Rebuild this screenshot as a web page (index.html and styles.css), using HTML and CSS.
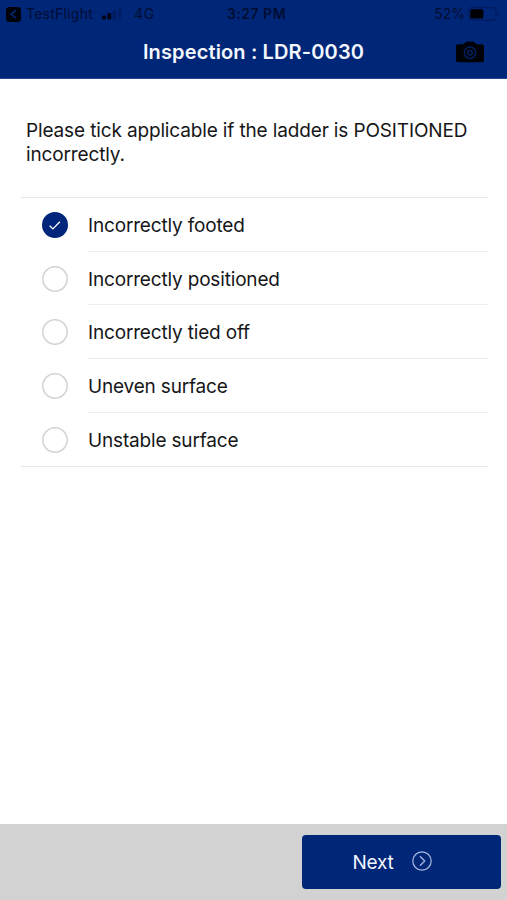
FILE: index.html
```html
<!DOCTYPE html>
<html lang="en">
<head>
<meta charset="utf-8">
<title>Inspection : LDR-0030</title>
<link rel="stylesheet" href="styles.css">
</head>
<body>
<div class="screen">
  <header class="header">
    <div class="status">
      <div class="status-left">
        <svg class="back" viewBox="0 0 15 15"><rect width="15" height="15" rx="3.5" fill="#00020a"/><path d="M10 3.400 5 7.300l5 3.900" fill="none" stroke="#002678" stroke-width="1.5"/></svg>
        <span class="app">TestFlight</span>
        <svg class="signal" viewBox="0 0 20 12"><rect x="0" y="7.500" width="4" height="4" rx="1" fill="#000617"/><rect x="5.300" y="5" width="4" height="6.500" rx="1" fill="#000617"/><rect x="10.600" y="2.500" width="3.500" height="9" rx="1" fill="#001c60"/><rect x="16" y="0" width="3.500" height="11.500" rx="1" fill="#001f67"/></svg>
        <span class="network">4G</span>
      </div>
      <span class="time">3:27 PM</span>
      <div class="status-right">
        <span class="percent">52%</span>
        <svg class="battery" viewBox="0 0 31 14"><rect x=".6" y=".6" width="27.500" height="12.600" rx="3.500" fill="none" stroke="#001b5d" stroke-width="1.200"/><rect x="2.300" y="2.300" width="13" height="9.300" rx="1.500" fill="#000"/><path d="M29.300 4.700q1.400.8 1.400 2.300t-1.400 2.300z" fill="#001b5d"/></svg>
      </div>
    </div>
    <div class="nav">
      <h1 class="title">Inspection : LDR-0030</h1>
      <svg class="camera" viewBox="0 0 28 22"><path d="M2 3.200h5.500L10 1q.8-.6 1.700-.6h4.600q.9 0 1.700.6l2.500 2.200H26q2 0 2 2v14q0 2-2 2H2q-2 0-2-2v-14q0-2 2-2z" fill="#000207"/><circle cx="14" cy="11.800" r="5.700" fill="none" stroke="#002263" stroke-width="1.500"/><circle cx="14" cy="11.800" r="2.300" fill="none" stroke="#002263" stroke-width="1.500"/></svg>
    </div>
  </header>
  <main class="content">
    <p class="prompt">Please tick applicable if the ladder is POSITIONED<br>incorrectly.</p>
    <ul class="options">
      <li class="option"><svg class="radio" viewBox="0 0 26 26"><circle cx="13" cy="13" r="13" fill="#00257a"/><path d="m7.700 13.800 3.200 3.100 7-7.100" fill="none" stroke="#fff" stroke-width="1.300"/></svg><span class="label">Incorrectly footed</span></li>
      <li class="option"><svg class="radio" viewBox="0 0 26 26"><circle class="ring" cx="13" cy="13" r="12.200"/></svg><span class="label">Incorrectly positioned</span></li>
      <li class="option"><svg class="radio" viewBox="0 0 26 26"><circle class="ring" cx="13" cy="13" r="12.200"/></svg><span class="label">Incorrectly tied off</span></li>
      <li class="option"><svg class="radio" viewBox="0 0 26 26"><circle class="ring" cx="13" cy="13" r="12.200"/></svg><span class="label">Uneven surface</span></li>
      <li class="option"><svg class="radio" viewBox="0 0 26 26"><circle class="ring" cx="13" cy="13" r="12.200"/></svg><span class="label">Unstable surface</span></li>
    </ul>
  </main>
  <footer class="footer">
    <button class="next"><span>Next</span><svg class="arrow" viewBox="0 0 20 20"><circle cx="10" cy="10" r="9.200" fill="none" stroke="#a9b9df" stroke-width="1.200"/><path d="m8 5.300 4.700 4.700L8 14.700" fill="none" stroke="#a9b9df" stroke-width="1.300"/></svg></button>
  </footer>
</div>
</body>
</html>
```

FILE: styles.css
```css
* { box-sizing: border-box; }
body { margin: 0; font-family: Inter, sans-serif; color: #161618; background: #fff; }
.screen { display: flex; flex-direction: column; width: 507px; height: 900px; }
.header { height: 79px; background: #002678; border-bottom: 1px solid #27468d; }
.status { display: grid; grid-template-columns: 1fr auto 1fr; align-items: center; height: 28px; padding: 0 8px 0 6px; color: #000d32; font-size: 14px; line-height: 28px; }
.status-left, .status-right { display: flex; align-items: center; }
.status-right { justify-content: flex-end; }
.back { width: 15px; height: 15px; }
.app { margin-left: 5px; width: 67px; letter-spacing: .25px; white-space: nowrap; }
.signal { width: 20px; height: 12px; margin-left: 9px; }
.network { margin-left: 12px; letter-spacing: .8px; }
.time { margin-left: 8px; font-weight: 600; letter-spacing: .5px; }
.percent { margin-right: 3px; }
.battery { width: 31px; height: 14px; }
.nav { display: grid; grid-template-columns: 1fr auto 1fr; align-items: center; height: 48px; padding: 0 23px; }
.title { grid-column: 2; margin: 0; color: #f5f7ff; font-size: 20px; font-weight: 600; line-height: 24px; letter-spacing: .14px; white-space: nowrap; }
.camera { justify-self: end; width: 28px; height: 22px; }
.content { flex: 1; }
.prompt { margin: 39px 20px 0 26px; padding-top: 1px; font-size: 19px; line-height: 24px; letter-spacing: -.14px; white-space: nowrap; }
.options { list-style: none; margin: 30px 19px 0 21px; padding: 0; border-top: 1px solid #e6e6e6; border-bottom: 1px solid #e6e6e6; }
.option { display: flex; align-items: center; height: 53.700px; padding-left: 21px; }
.radio { flex: none; width: 26px; height: 26px; margin-right: 20px; }
.ring { fill: none; stroke: #d3d3d3; stroke-width: 1.500; }
.label { flex: 1; height: 100%; border-bottom: 1px solid #ededed; font-size: 19px; line-height: 56px; letter-spacing: -.17px; }
.option:last-child .label { border-bottom: 0; }
.footer { height: 76px; padding: 11px 6px 0 0; display: flex; justify-content: flex-end; align-items: flex-start; background: #d2d2d2; }
.next { display: flex; align-items: center; width: 199px; height: 54px; padding: 0 0 0 50px; border: 0; border-radius: 4px; background: #002678; color: #f4f7ff; font: 400 19px Inter, sans-serif; letter-spacing: -.2px; }
.next span { width: 42px; }
.arrow { width: 20px; height: 20px; margin: -2px 0 0 18px; }
```
